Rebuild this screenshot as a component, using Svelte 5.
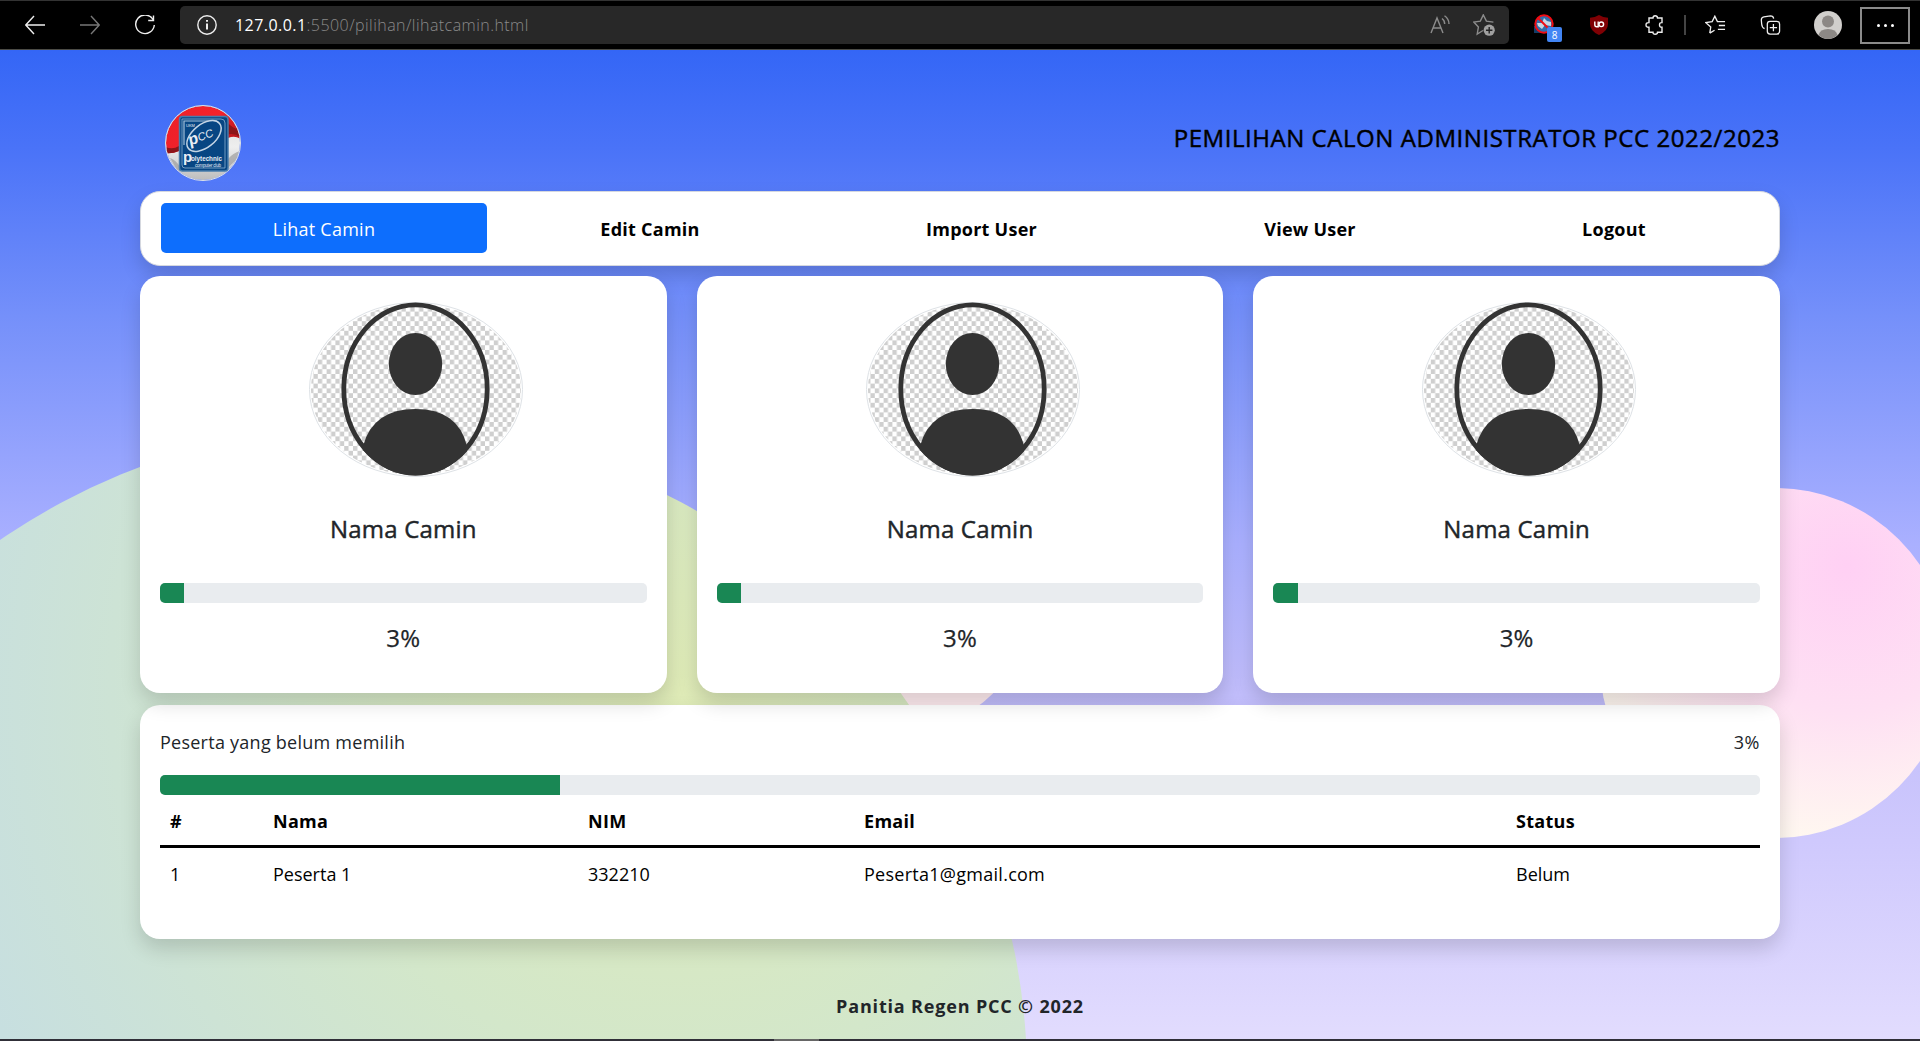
<script>
  const menu = [
    { label: 'Lihat Camin', active: true },
    { label: 'Edit Camin' },
    { label: 'Import User' },
    { label: 'View User' },
    { label: 'Logout' }
  ];
  const candidates = [
    { name: 'Nama Camin', percent: 3, fill: 5 },
    { name: 'Nama Camin', percent: 3, fill: 5 },
    { name: 'Nama Camin', percent: 3, fill: 5 }
  ];
  const voters = [{ no: 1, name: 'Peserta 1', nim: '332210', email: 'Peserta1@gmail.com', status: 'Belum' }];
</script>

<div class="window">
  <header class="chrome">
    <div class="tabline"></div>
    <div class="bar">
      <div class="controls">
        <svg class="ic" viewBox="0 0 20 20"><path d="M20 10H1M9 1 .8 10 9 19" /></svg>
        <svg class="ic dim" viewBox="0 0 20 20"><path d="M0 10h19M11 1l8.2 9L11 19" /></svg>
        <svg class="ic" viewBox="0 0 20 20"><path d="M18 4.5A9.3 9.3 0 1 0 19.3 10M18.5.5v5h-5.3" /></svg>
      </div>
      <div class="address">
        <svg class="ic info" viewBox="0 0 20 20"><circle cx="10" cy="10" r="9.2" /><path d="M10 8.5v6M10 5v1.8" stroke-width="2" /></svg>
        <span class="url"><b>127.0.0.1</b><i>:5500/pilihan/lihatcamin.html</i></span>
        <svg class="ic aloud" viewBox="0 0 20 20"><path d="M1 18 7 3l6 15M3.2 13h7.6M12 3.5q2.7 2 2.7 5.5M14.5.8Q19 4 19 9" /></svg>
        <svg class="ic addstar" viewBox="0 0 22 22"><path d="M10 16.500 4.200 20l1.200-7L.8 8.100l6.500-1L10.300.9l3.100 6.200 7 1" /><circle class="solid" cx="16.200" cy="16.200" r="5.600" /><path class="cut" d="M16.200 13v6.400M13 16.200h6.400" /></svg>
      </div>
      <div class="extensions">
        <div class="blocker">
          <svg viewBox="0 0 20 20"><rect x="0" y="12" width="9" height="7" fill="#123d68" /><circle cx="10" cy="10" r="8.5" fill="#306eac" /><path d="M3 9h5l2-5 3 3 4 1v4l-6-1-3 4-4-3z" fill="#c6d5e2" /><circle cx="10" cy="10" r="8.7" fill="none" stroke="#f30b12" stroke-width="2" /><path d="m4 4 12 12" stroke="#f30b12" stroke-width="2" /></svg>
          <span>8</span>
        </div>
        <svg class="shield" viewBox="0 0 18 20"><path d="M9 0q4 2.500 9 2.800V9q0 7-9 11Q0 16 0 9V2.800Q5 2.500 9 0Z" fill="#800004" /><path d="M4.800 6.500v3.300q0 1.900 1.900 1.900h1.500V6.500" fill="none" stroke="#fff" stroke-width="1.400" /><circle cx="11.300" cy="9.300" r="2.300" fill="none" stroke="#fff" stroke-width="1.400" /></svg>
        <svg class="ic puzzle" viewBox="0 0 20 20"><path d="M4 3h4Q8 .8 10.200.8T12.500 3H17v4.600q-2.500-.2-2.500 2.300t2.500 2.300v5h-4.500q0 2-2.300 2T8 17.200H4v-5Q1 12.400 1 9.900T4 7.600Z" /></svg>
        <hr />
        <svg class="ic fav" viewBox="0 0 22 20"><path d="m5 18.500 1-6.300L1 7.500l6.500-1L10.300.8 13 6.500h8M14.500 10.500H21M13.500 14.500H21M10 15.500l-5 3" /></svg>
        <svg class="ic coll" viewBox="0 0 22 22"><path d="M4.500 15Q1.500 14 1.300 10L.9 5.500q0-3 2.800-3.500L11 1q3 0 3.500 3" /><rect x="7.500" y="7" width="13.500" height="14" rx="3" /><path d="M14.200 10v8M10.200 14h8" /></svg>
        <svg class="profile" viewBox="0 0 28 28"><circle cx="14" cy="14" r="14" fill="#d1cfcc" /><circle cx="14" cy="10.500" r="6" fill="#8c8885" /><path d="M4.500 24Q6 18 14 18t9.500 6Q19 28 14 28T4.500 24Z" fill="#8c8885" /></svg>
        <div class="more"><span></span><span></span><span></span></div>
      </div>
    </div>
  </header>

  <main>
    <svg class="backdrop" viewBox="0 0 1920 990" preserveAspectRatio="none" aria-hidden="true">
      <defs>
        <radialGradient id="green" gradientUnits="userSpaceOnUse" cx="680" cy="640" r="760"><stop offset="0" stop-color="#dfebb7" /><stop offset=".5" stop-color="#d3e7ca" /><stop offset="1" stop-color="#c7dfe0" /></radialGradient>
        <radialGradient id="pink" gradientUnits="userSpaceOnUse" cx="1847" cy="516" r="290"><stop offset="0" stop-color="#ffd0f4" /><stop offset=".5" stop-color="#fee0f3" /><stop offset="1" stop-color="#fffaf0" /></radialGradient>
      </defs>
      <circle cx="900" cy="551" r="131" fill="#ffecf0" />
      <circle cx="371.600" cy="1030.300" r="655.700" fill="url(#green)" />
      <circle cx="1775" cy="613" r="175" fill="url(#pink)" />
    </svg>

    <div class="container">
      <div class="heading">
        <svg class="logo" viewBox="0 0 76 76">
          <defs>
            <clipPath id="round"><circle cx="38" cy="38" r="37" /></clipPath>
            <linearGradient id="cloth" x2="0" y2="1"><stop stop-color="#d8d8d8" /><stop offset=".55" stop-color="#eeeeee" /><stop offset="1" stop-color="#bcbcbc" /></linearGradient>
            <linearGradient id="red" x1="0" x2="1" y2=".4"><stop stop-color="#ec2028" /><stop offset=".7" stop-color="#f4222b" /><stop offset="1" stop-color="#c0181f" /></linearGradient>
          </defs>
          <g clip-path="url(#round)">
            <rect width="76" height="76" fill="url(#cloth)" />
            <path d="M0 0h76v34q-6-4-13-1L38 48 14 46Q7 49 0 48Z" fill="url(#red)" />
            <path d="M0 42q8 3 14-1v5q-7 3-14 2ZM62 17q7 8 13 7v8q-7-5-13-2Z" fill="#8d1519" />
            <path d="M5 53q6 2 10 9v8M63 54q5-6 12-8v7q-6 3-12 10" fill="#999" opacity=".65" />
          </g>
          <circle cx="38" cy="38" r="37.500" fill="none" stroke="#dee2e6" />
          <rect x="14.500" y="11.500" width="48.500" height="54.500" rx="3" fill="#074683" stroke="#477cac" stroke-width="1.500" />
          <path d="M17 14h39q4 0 4 4v45H20q-3 0-3-3Z" fill="none" stroke="#8cb0d0" stroke-width=".8" />
          <path d="M19 40V16h33" fill="none" stroke="#a3c0da" stroke-width="1.200" />
          <ellipse cx="39" cy="31" rx="20" ry="11.500" transform="rotate(-39 39 31)" fill="#074683" stroke="#c4d5e5" stroke-width="1.500" />
          <text class="lg" x="30" y="39" font-size="16" transform="rotate(-20 30 39) skewX(-8)"><tspan font-weight="700">p</tspan><tspan font-size="11" dy="-1">CC</tspan></text>
          <text class="lg" x="21" y="22" font-size="4">UKM</text>
          <text class="lg" x="18" y="57" font-size="15" font-weight="700">p</text>
          <text class="lg" x="26" y="56" font-size="7" font-weight="700" textLength="31" lengthAdjust="spacingAndGlyphs">olytechnic</text>
          <text class="lg" x="30" y="61.500" font-size="4.500" textLength="26">computer club</text>
        </svg>
        <h1>PEMILIHAN CALON ADMINISTRATOR PCC 2022/2023</h1>
      </div>

      <nav class="panel">
        {#each menu as item}
          <a href="#menu" class:active={item.active}>{item.label}</a>
        {/each}
      </nav>

      <section class="cards">
        {#each candidates as c, i}
          <article class="panel card">
            <svg class="portrait" viewBox="0 0 214 175">
              <defs>
                <pattern id="chk{i}" width="8.800" height="9.600" patternUnits="userSpaceOnUse"><rect width="8.800" height="9.600" fill="#fff" /><path d="M0 0h4.400v4.800H0zM4.400 4.800h4.400v4.800H4.400z" fill="#cfcfcf" /></pattern>
                <clipPath id="ring{i}"><ellipse cx="106.500" cy="87" rx="74" ry="86.500" /></clipPath>
              </defs>
              <ellipse cx="107" cy="87.500" rx="106.500" ry="87" fill="#fff" stroke="#dee2e6" />
              <ellipse cx="107" cy="87.500" rx="105" ry="85.500" fill="url(#chk{i})" />
              <ellipse cx="106.500" cy="87" rx="71.700" ry="84.200" fill="none" stroke="#333" stroke-width="4.800" />
              <ellipse cx="106.500" cy="62" rx="26.700" ry="31" fill="#333" />
              <path clip-path="url(#ring{i})" d="M54 144Q64 107 106.500 107T158 144v31H54Z" fill="#333" />
            </svg>
            <h2>{c.name}</h2>
            <div class="progress"><div style="width: {c.fill}%"></div></div>
            <p>{c.percent}%</p>
          </article>
        {/each}
      </section>

      <section class="panel voters">
        <div class="summary"><span>Peserta yang belum memilih</span><span class="share">3%</span></div>
        <div class="progress"><div style="width: 25%"></div></div>
        <div class="row head"><span>#</span><span>Nama</span><span>NIM</span><span>Email</span><span>Status</span></div>
        {#each voters as v}
          <div class="row"><span>{v.no}</span><span>{v.name}</span><span>{v.nim}</span><span class="mail">{v.email}</span><span>{v.status}</span></div>
        {/each}
      </section>
      <footer>Panitia Regen PCC © 2022</footer>
    </div>
  </main>
  <div class="taskbar"><div></div></div>
</div>

<style>
  :global(body) { margin: 0; overflow: hidden; }
  .window { width: 1920px; height: 1041px; display: flex; flex-direction: column; font-family: "Open Sans", "Noto Sans", sans-serif; color: #212529; box-sizing: border-box; }
  .window :global(*) { box-sizing: border-box; }

  .chrome { height: 50px; flex: none; background: #000; border-bottom: 1px solid #4b4b45; }
  .tabline { height: 1px; background: #333; }
  .bar { height: 48px; display: flex; align-items: center; }
  .ic { width: 20px; height: 20px; fill: none; stroke: #eee; stroke-width: 1.4; flex: none; }
  .dim { stroke: #777; }
  .controls { display: flex; gap: 35px; padding-left: 25px; width: 180px; flex: none; }
  .address { width: 1329px; height: 38px; border-radius: 5px; background: #282828; display: flex; align-items: center; padding: 0 14px 0 17px; flex: none; }
  .url { margin-left: 18px; margin-right: auto; font: 300 16px/20px "Open Sans", sans-serif; letter-spacing: .45px; white-space: nowrap; }
  .url b { font-weight: 400; color: #fff; }
  .url i { font-style: normal; color: #8a8a8a; }
  .aloud, .addstar { stroke: #8c8c8c; }
  .addstar { width: 22px; height: 22px; margin-left: 23px; }
  .solid { fill: #a0a0a0; stroke: none; }
  .cut { stroke: #222; }
  .extensions { display: flex; align-items: center; flex: 1; padding-left: 25px; }
  .blocker { display: grid; width: 28px; height: 28px; margin-top: 5px; margin-right: 28px; }
  .blocker svg { grid-area: 1 / 1; width: 20px; height: 20px; }
  .blocker span { grid-area: 1 / 1; place-self: end; width: 15px; height: 15px; background: #4285f4; color: #fff; border-radius: 2px; font: 10px/16px "Open Sans", sans-serif; text-align: center; }
  .shield { width: 18px; height: 20px; margin-right: 37px; }
  .puzzle { margin-right: 19px; }
  hr { width: 2px; height: 20px; border: 0; margin: 0 19px 0 0; background: #444; }
  .fav { width: 21px; margin-right: 34px; }
  .coll { width: 21px; margin-right: 33px; }
  .profile { width: 28px; height: 28px; margin-right: 18px; }
  .more { width: 50px; height: 37px; border: 2px solid #8b8b8b; display: flex; align-items: center; justify-content: center; gap: 4px; }
  .more span { width: 3px; height: 3px; border-radius: 2px; background: #fff; }

  main { display: grid; height: 989px; flex: none; overflow: hidden; background: linear-gradient(#3466f6 0, #4a73f8 10%, #7590fa 27%, #aab0ff 50%, #c1bdfb 65%, #cfc9fd 80%, #e2dcfe 100%); }
  .backdrop { grid-area: 1 / 1; width: 1920px; height: 990px; }
  .container { grid-area: 1 / 1; width: 1640px; margin: 0 auto; z-index: 1; }
  .heading { display: flex; justify-content: space-between; height: 141px; padding: 55px 0 0 25px; }
  .logo { width: 76px; height: 76px; }
  .lg { fill: #e8eef5; font-family: "Liberation Sans", sans-serif; }
  h1 { margin: 17px 0 0; font-size: 24px; line-height: 32px; font-weight: 500; color: #000; white-space: nowrap; letter-spacing: .55px; -webkit-text-stroke: .45px #000; }
  .panel { background: #fff; border-radius: 20px; box-shadow: 0 10px 20px rgba(0, 0, 0, .15); }
  nav { height: 75px; display: grid; grid-template-columns: 326px 326px 337px 320px 288px; align-items: start; padding: 11px 20px 0; border: 1px solid #d5d8df; }
  nav a { height: 50px; line-height: 53px; text-align: center; font-size: 18px; font-weight: 700; color: #000; text-decoration: none; border-radius: 5px; letter-spacing: .25px; }
  nav a.active { background: #0d6efd; color: #fff; font-weight: 400; }
  .cards { display: grid; grid-template-columns: repeat(3, 1fr); gap: 30px; margin-top: 10px; }
  .card { height: 417px; padding: 26px 20px 0; text-align: center; }
  .portrait { display: block; width: 214px; height: 175px; margin: 0 0 0 149px; }
  h2 { margin: 35px 0 0; font-size: 24px; line-height: 34px; font-weight: 500; letter-spacing: .2px; -webkit-text-stroke: .45px #212529; }
  .card .progress { margin-top: 37px; }
  .card p { margin: 17px 0 0; font-size: 24px; line-height: 36px; font-weight: 400; letter-spacing: .2px; -webkit-text-stroke: .25px #212529; }
  .progress { height: 20px; border-radius: 5px; background: #e9ecef; overflow: hidden; }
  .progress div { height: 20px; background: #198754; }
  .voters { margin-top: 12px; height: 234px; padding: 20px; }
  .summary { display: flex; justify-content: space-between; height: 50px; font-size: 18px; line-height: 34px; letter-spacing: .25px; }
  .row { display: grid; grid-template-columns: 103px 315px 276px 652px 1fr; padding-left: 10px; height: 53px; line-height: 53px; font-size: 18px; color: #000; white-space: nowrap; }
  .row.head { font-weight: 700; border-bottom: 3px solid #000; line-height: 53px; letter-spacing: .3px; }
  .mail { letter-spacing: .27px; }
  .share { letter-spacing: .5px; }
  footer { text-align: center; font-size: 18px; line-height: 26px; font-weight: 700; margin-top: 54px; letter-spacing: .83px; }
  .taskbar { height: 2px; background: #302f38; display: flex; padding-left: 774px; }
  .taskbar div { width: 45px; background: #666; }
</style>
